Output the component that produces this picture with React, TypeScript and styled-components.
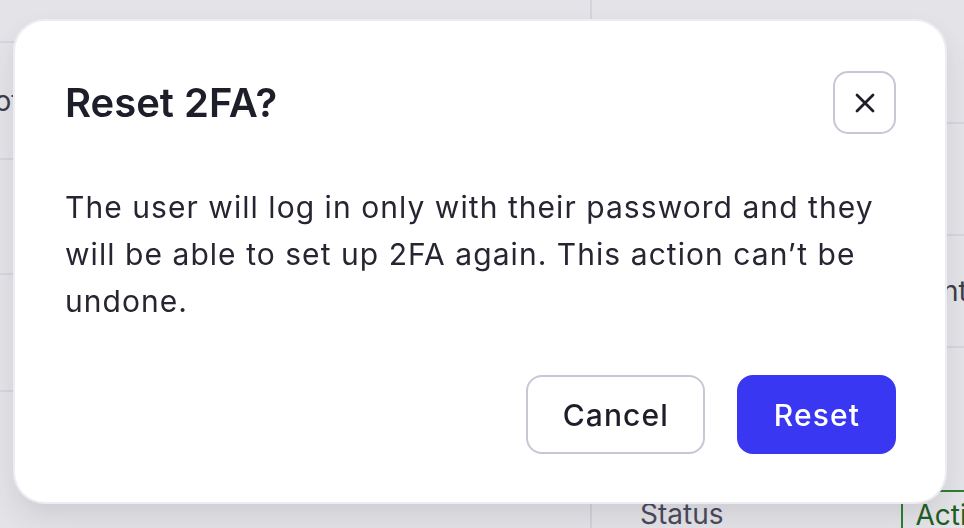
import React from 'react';
import styled, { createGlobalStyle } from 'styled-components';

const GlobalStyle = createGlobalStyle`
  html, body {
    margin: 0;
    padding: 0;
    width: 100%;
    height: 100%;
    overflow: hidden;
    background: #e4e4e8;
    font-family: Inter, "Noto Sans", sans-serif;
  }
`;

/* page behind the dialog */
const Page = styled.div`
  width: 964px;
  height: 528px;
  display: grid;
  grid-template-columns: 590px 1fr;
  background: #e4e4e8;
  overflow: hidden;
`;

const Column = styled.div<{ $top: number; $divider?: boolean }>`
  display: flex;
  flex-direction: column;
  padding-top: ${(p) => p.$top}px;
  border-left: ${(p) => (p.$divider ? '2px solid #d3d3db' : 'none')};
`;

const Row = styled.div<{ $h: number; $indent?: number }>`
  height: ${(p) => p.$h}px;
  flex-shrink: 0;
  border-top: 2px solid #d6d6de;
  display: flex;
  align-items: center;
  padding-left: ${(p) => p.$indent ?? 0}px;
  font-size: 28px;
  color: #3c3c4a;
  white-space: nowrap;
`;

const Cut = styled.span`
  margin-left: -40px;
`;

const StatusCell = styled.div`
  display: flex;
  align-items: center;
  gap: 178px;
  padding-left: 48px;
  padding-top: 30px;
  font-size: 28px;
  color: #4a4a5c;
`;

const Badge = styled.span`
  border: 2px solid #2e7d32;
  border-right: none;
  border-bottom: none;
  border-radius: 10px 0 0 0;
  padding: 6px 12px;
  color: #1f5e24;
`;

/* dialog */
const Overlay = styled.div`
  position: fixed;
  inset: 0;
  display: flex;
  align-items: flex-start;
  padding: 21px 19px 0 15px;
`;

const Dialog = styled.div`
  flex: 1;
  height: 481px;
  box-sizing: border-box;
  background: #ffffff;
  border-radius: 30px;
  padding: 50px 49px 48px 50px;
  box-shadow: 0 0 0 2px #ececf2, 0 14px 28px rgba(40, 40, 60, 0.12);
  display: flex;
  flex-direction: column;
`;

const Header = styled.div`
  display: flex;
  align-items: center;
  justify-content: space-between;
  height: 63px;
`;

const Title = styled.h2`
  margin: 0;
  font-size: 40px;
  font-weight: 600;
  color: #1e1e2a;
`;

const CloseButton = styled.button`
  width: 63px;
  height: 63px;
  box-sizing: border-box;
  border: 2px solid #c7c7d5;
  border-radius: 15px;
  background: #ffffff;
  display: flex;
  align-items: center;
  justify-content: center;
  padding: 0;
`;

const Body = styled.p`
  margin: 50px 0 0;
  font-size: 30px;
  line-height: 47px;
  letter-spacing: 1.05px;
  color: #262633;
`;

const Actions = styled.div`
  margin-top: auto;
  display: flex;
  justify-content: flex-end;
  gap: 32px;
`;

const Button = styled.button<{ $primary?: boolean }>`
  height: 79px;
  box-sizing: border-box;
  padding: 0 34px 0 35px;
  border-radius: 16px;
  font-family: Inter, "Noto Sans", sans-serif;
  font-size: 30px;
  font-weight: 500;
  letter-spacing: 1.1px;
  border: 2px solid ${(p) => (p.$primary ? '#3a37f2' : '#c7c7d5')};
  background: ${(p) => (p.$primary ? '#3a37f2' : '#ffffff')};
  color: ${(p) => (p.$primary ? '#ffffff' : '#1e1e2a')};
`;

const CloseIcon = () => (
  <svg width="20" height="20" viewBox="0 0 20 20" fill="none">
    <path d="M2 2L18 18M18 2L2 18" stroke="#1e1e2a" strokeWidth="2.8" strokeLinecap="round" />
  </svg>
);

const App = () => {
  return (
    <>
      <GlobalStyle />
      <Page>
        <Column $top={41}>
          <Row $h={115}>
            <Cut>Photo</Cut>
          </Row>
          <Row $h={113} />
          <Row $h={115} />
          <Row $h={115} />
        </Column>
        <Column $top={122} $divider>
          <Row $h={110} />
          <Row $h={110} $indent={350}>
            nt
          </Row>
          <Row $h={112} />
          <StatusCell>
            Status
            <Badge>Active</Badge>
          </StatusCell>
        </Column>
      </Page>
      <Overlay>
        <Dialog role="dialog" aria-labelledby="reset-title">
          <Header>
            <Title id="reset-title">Reset 2FA?</Title>
            <CloseButton aria-label="Close">
              <CloseIcon />
            </CloseButton>
          </Header>
          <Body>
            The user will log in only with their password and they will be able to set up 2FA
            again. This action can’t be undone.
          </Body>
          <Actions>
            <Button>Cancel</Button>
            <Button $primary>Reset</Button>
          </Actions>
        </Dialog>
      </Overlay>
    </>
  );
};

export default App;
